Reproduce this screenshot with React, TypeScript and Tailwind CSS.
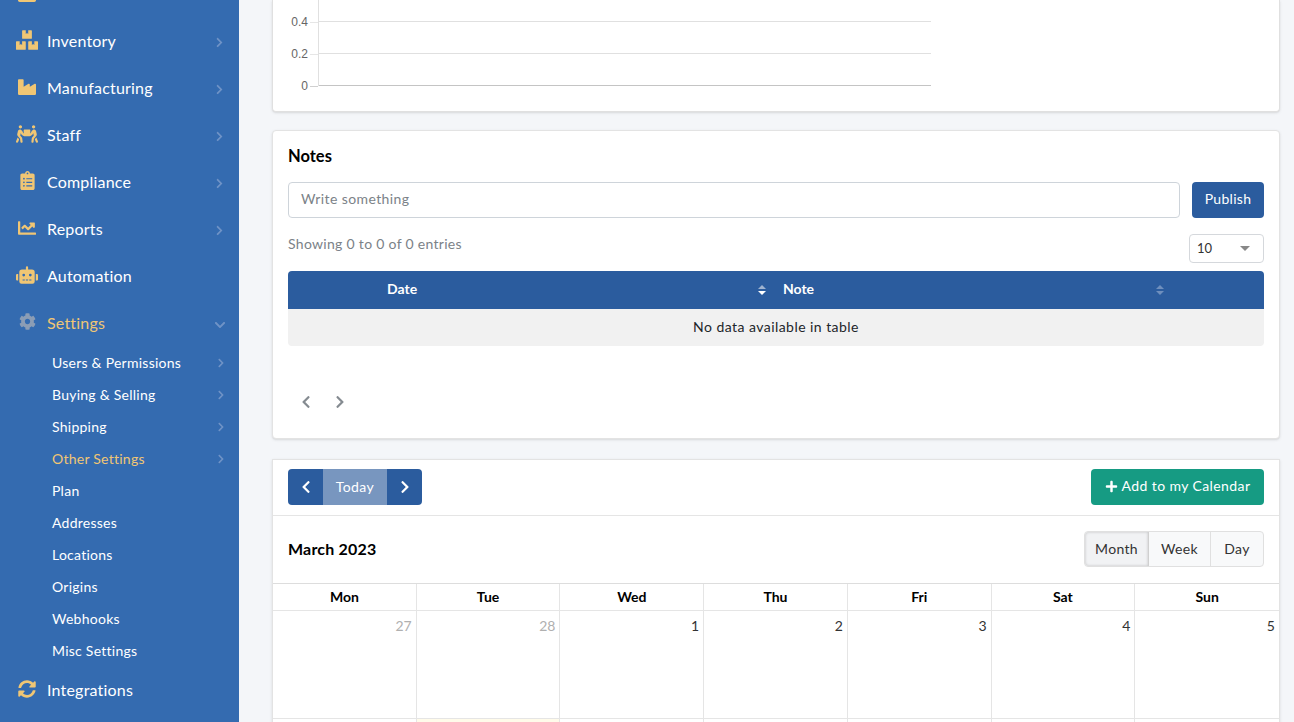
import { FaBox, FaBoxes, FaChartLine, FaChevronDown, FaChevronLeft, FaChevronRight, FaClipboardList, FaCog, FaIndustry, FaPeopleCarry, FaPlus, FaRobot, FaSyncAlt } from "react-icons/fa";
import type { IconType } from "react-icons";

const mainItems: { label: string; icon: IconType; size: number; arrow?: boolean }[] = [
  { label: "Inventory", icon: FaBoxes, size: 22, arrow: true },
  { label: "Manufacturing", icon: FaIndustry, size: 18, arrow: true },
  { label: "Staff", icon: FaPeopleCarry, size: 22, arrow: true },
  { label: "Compliance", icon: FaClipboardList, size: 19, arrow: true },
  { label: "Reports", icon: FaChartLine, size: 18, arrow: true },
  { label: "Automation", icon: FaRobot, size: 22 },
];

const subItems = [
  { label: "Users & Permissions", arrow: true },
  { label: "Buying & Selling", arrow: true },
  { label: "Shipping", arrow: true },
  { label: "Other Settings", arrow: true, active: true },
  { label: "Plan" },
  { label: "Addresses" },
  { label: "Locations" },
  { label: "Origins" },
  { label: "Webhooks" },
  { label: "Misc Settings" },
];

const days = ["Mon", "Tue", "Wed", "Thu", "Fri", "Sat", "Sun"];
const dates = [
  { n: 27, muted: true },
  { n: 28, muted: true },
  { n: 1 },
  { n: 2 },
  { n: 3 },
  { n: 4 },
  { n: 5 },
];

function NavRow({ label, icon: Icon, size, arrow }: { label: string; icon: IconType; size: number; arrow?: boolean }) {
  return (
    <div className="flex h-[47px] items-center pl-[16px] pr-[14px] text-[16px] tracking-[0.2px] text-white">
      <span className="-mt-[2px] mr-[9px] flex w-[22px] justify-center text-[#f0c674]">
        <Icon size={size} />
      </span>
      <span className="flex-1">{label}</span>
      {arrow && <FaChevronRight size={11} className="mt-[4px] text-[#6f93c6]" />}
    </div>
  );
}

function SortArrows({ active }: { active?: boolean }) {
  return (
    <span className="flex flex-col gap-[2px]">
      <span className={`h-0 w-0 border-x-[4px] border-b-[4px] border-x-transparent ${active ? "border-b-[#9fb3d0]" : "border-b-[#6f8fbd]"}`} />
      <span className={`h-0 w-0 border-x-[4px] border-t-[4px] border-x-transparent ${active ? "border-t-white" : "border-t-[#6f8fbd]"}`} />
    </span>
  );
}

export default function App() {
  return (
    <div className="flex h-[722px] w-[1294px] overflow-hidden bg-[#f4f6f9] font-['Lato','Liberation_Sans',sans-serif] text-[#212529]">
      <aside className="h-full w-[239px] shrink-0 overflow-hidden bg-[#346bb0]">
        <div className="-mt-[30px]">
          <NavRow label="Products" icon={FaBox} size={18} arrow />
        </div>
        <div>
          {mainItems.map((item) => (
            <NavRow key={item.label} {...item} />
          ))}
        </div>
        <div className="flex h-[47px] items-center pl-[16px] pr-[13px] text-[16px] tracking-[0.2px] text-[#f0c674]">
          <span className="-mt-[2px] mr-[9px] flex w-[22px] justify-center text-[#8b9db5]">
            <FaCog size={17} />
          </span>
          <span className="flex-1">Settings</span>
          <FaChevronDown size={12} className="mt-[4px] text-[#6f93c6]" />
        </div>
        <div>
          {subItems.map((item) => (
            <div
              key={item.label}
              className={`flex h-[32px] items-center pl-[52px] pr-[13px] text-[14px] tracking-[0.25px] ${item.active ? "text-[#f0c674]" : "text-white"}`}
            >
              <span className="flex-1">{item.label}</span>
              {item.arrow && <FaChevronRight size={10} className="mt-[1px] text-[#6f93c6]" />}
            </div>
          ))}
        </div>
        <div>
          <NavRow label="Integrations" icon={FaSyncAlt} size={18} />
        </div>
      </aside>

      <main className="flex-1 overflow-hidden pl-[33px] pr-[14px]">
        <section className="h-[112px] rounded-b border border-t-0 border-[#e0e0e0] bg-white shadow-sm">
          <div className="ml-[18px] w-[640px]">
            <div className="ml-[27px] h-[6px] border-l border-[#e0e0e0]" />
            {["0.4", "0.2", "0"].map((tick, i) => (
              <div key={tick} className="flex h-[32px] items-center">
                <span className="w-[17px] text-right font-['Liberation_Sans',sans-serif] text-[12px] text-[#666666]">{tick}</span>
                <div className={`ml-[2px] w-[8px] border-t ${i === 2 ? "border-[#d0d0d0]" : "border-[#e6e6e6]"}`} />
                <div className={`flex-1 self-start border-l border-[#e0e0e0] ${i === 2 ? "h-[16px]" : "h-[32px]"}`}>
                  <div className={`mt-[15px] border-t ${i === 2 ? "border-[#c4c4c4]" : "border-[#e0e0e0]"}`} />
                </div>
              </div>
            ))}
          </div>
        </section>

        <section className="mt-[18px] h-[309px] rounded border border-[#e3e3e3] bg-white px-[15px] pt-[15px] shadow-sm">
          <h2 className="text-[16.5px] font-bold leading-[20px] text-black">Notes</h2>
          <div className="mt-[16px] flex gap-[12px]">
            <div className="flex h-[36px] flex-1 items-center rounded border border-[#ced4da] px-[12px] pb-[4px] text-[14px] tracking-[0.4px] text-[#7b8288]">
              Write something
            </div>
            <button className="h-[36px] w-[72px] rounded bg-[#2b5c9e] pb-[4px] text-[14px] tracking-[0.3px] text-white">Publish</button>
          </div>
          <div className="mt-[16px] flex justify-between">
            <span className="text-[14px] leading-[20px] tracking-[0.3px] text-[#7b8288]">Showing 0 to 0 of 0 entries</span>
            <div className="flex h-[29px] w-[75px] items-center justify-between rounded border border-[#d5d8dc] pl-[7px] pr-[13px] text-[13px] text-[#333333]">
              10
              <span className="h-0 w-0 border-x-[5px] border-t-[5px] border-x-transparent border-t-[#888888]" />
            </div>
          </div>
          <div className="mt-[8px] flex h-[38px] items-center rounded-t bg-[#2b5c9e] text-[14px] font-bold text-white">
            <div className="flex w-[478px] items-center pl-[99px]">
              <span className="flex-1 pb-[4px]">Date</span>
              <SortArrows active />
            </div>
            <div className="flex w-[398px] items-center pl-[17px]">
              <span className="flex-1 pb-[4px]">Note</span>
              <SortArrows />
            </div>
          </div>
          <div className="flex h-[37px] items-center justify-center rounded-b bg-[#f1f1f1] pb-[2px] text-[14px] tracking-[0.45px] text-[#212529]">
            No data available in table
          </div>
          <div className="mt-[49px] flex gap-[20px] pl-[11px] text-[#858b91]">
            <FaChevronLeft size={14} />
            <FaChevronRight size={14} />
          </div>
        </section>

        <section className="mt-[20px] border border-[#e3e3e3] bg-white shadow-sm">
          <div className="flex h-[56px] items-start justify-between border-b border-[#e5e5e5] px-[15px] pt-[9px]">
            <div className="flex h-[36px] overflow-hidden rounded text-white">
              <button className="flex w-[35px] items-center justify-center bg-[#2b5c9e]"><FaChevronLeft size={14} /></button>
              <button className="w-[64px] bg-[#7896bf] pb-[2px] text-[14px] tracking-[0.4px]">Today</button>
              <button className="flex w-[35px] items-center justify-center bg-[#2b5c9e]"><FaChevronRight size={14} /></button>
            </div>
            <button className="flex h-[36px] w-[173px] items-center justify-center gap-[4px] rounded bg-[#169b83] pb-[3px] text-[14px] tracking-[0.4px] text-white">
              <FaPlus size={13} className="mt-[2px]" />
              Add to my Calendar
            </button>
          </div>
          <div className="flex h-[67px] items-center justify-between px-[15px] pb-[2px]">
            <h2 className="text-[16px] font-bold tracking-[0.2px] text-black">March 2023</h2>
            <div className="flex h-[36px] rounded border border-[#e0e0e0] bg-[#f8f9fa] text-[14px] tracking-[0.3px] text-[#333333]">
              <button className="w-[64px] rounded-l border-r border-[#d0d0d0] bg-[#f1f2f4] shadow-[inset_0_0_3px_rgba(0,0,0,0.2)]">Month</button>
              <button className="w-[62px] border-r border-[#e0e0e0]">Week</button>
              <button className="w-[52px]">Day</button>
            </div>
          </div>
          <div className="grid grid-cols-7 border-t border-[#dddddd]">
            {days.map((day, i) => (
              <div
                key={day}
                className={`flex h-[27px] items-center justify-center border-b border-[#e5e5e5] pb-[2px] text-[14px] font-bold text-black ${i < 6 ? "border-r" : ""}`}
              >
                {day}
              </div>
            ))}
            {dates.map((date, i) => (
              <div
                key={date.n}
                className={`h-[108px] border-b border-[#e5e5e5] pr-[4px] pt-[4px] text-right text-[14px] ${i < 6 ? "border-r" : ""} ${date.muted ? "text-[#b0b0b0]" : "text-[#333333]"}`}
              >
                {date.n}
              </div>
            ))}
            {days.map((day, i) => (
              <div key={day} className={`h-[20px] border-[#e5e5e5] ${i < 6 ? "border-r" : ""} ${i === 1 ? "bg-[#fffbea]" : ""}`} />
            ))}
          </div>
        </section>
      </main>
    </div>
  );
}
